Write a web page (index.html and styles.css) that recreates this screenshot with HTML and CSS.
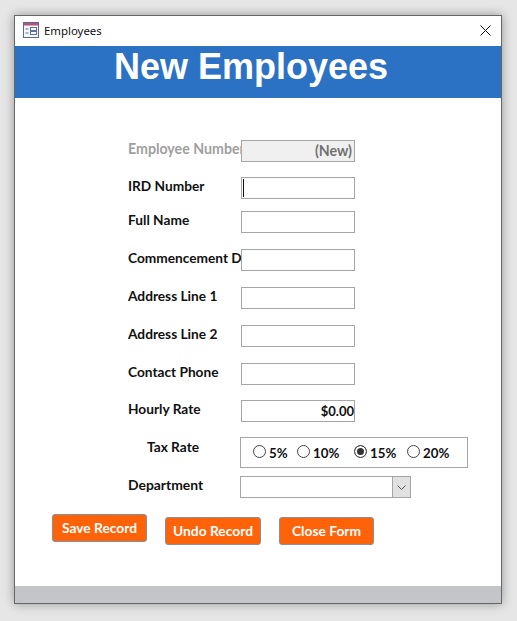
FILE: index.html
```html
<!DOCTYPE html>
<html lang="en">
<head>
  <meta charset="UTF-8">
  <meta name="viewport" content="width=device-width, initial-scale=1.0">
  <title>Employees</title>
  <link rel="stylesheet" href="styles.css">
</head>
<body>
  <div class="window">
    <div class="titlebar">
      <svg class="form-icon" width="16" height="16" viewBox="0 0 16 16">
        <rect x="0.5" y="0.5" width="15" height="15" fill="#f4f6fa" stroke="#5f6b85"/>
        <rect x="1" y="1" width="14" height="2.5" fill="#b5527e"/>
        <path d="M2.5 7h3M2.5 11h3" stroke="#5f7396" fill="none"/>
        <rect x="7.5" y="5.5" width="6" height="3" fill="none" stroke="#5f7396"/>
        <rect x="7.5" y="9.5" width="6" height="3" fill="none" stroke="#5f7396"/>
      </svg>
      <span class="title-text">Employees</span>
      <svg class="close-icon" width="11" height="11" viewBox="0 0 11 11">
        <path d="M0.5 0.5L10.5 10.5M10.5 0.5L0.5 10.5" stroke="#111" fill="none"/>
      </svg>
    </div>

    <div class="banner">New Employees</div>

    <form class="form-body">
      <div class="row row-first">
        <label class="label label-disabled">Employee Number</label>
        <div class="field field-disabled">(New)</div>
      </div>
      <div class="row row-15">
        <label class="label">IRD Number</label>
        <div class="field field-focus"><span class="caret"></span></div>
      </div>
      <div class="row row-12">
        <label class="label">Full Name</label>
        <div class="field"></div>
      </div>
      <div class="row">
        <label class="label">Commencement Date</label>
        <div class="field"></div>
      </div>
      <div class="row">
        <label class="label">Address Line 1</label>
        <div class="field"></div>
      </div>
      <div class="row">
        <label class="label">Address Line 2</label>
        <div class="field"></div>
      </div>
      <div class="row">
        <label class="label">Contact Phone</label>
        <div class="field"></div>
      </div>
      <div class="row row-15">
        <label class="label">Hourly Rate</label>
        <div class="field field-money">$0.00</div>
      </div>

      <div class="row row-15 row-tax">
        <label class="label label-tax">Tax Rate</label>
        <div class="tax-group">
          <span class="radio-item radio-5"><span class="radio"></span>5%</span>
          <span class="radio-item radio-10"><span class="radio"></span>10%</span>
          <span class="radio-item radio-15"><span class="radio radio-on"></span>15%</span>
          <span class="radio-item"><span class="radio"></span>20%</span>
        </div>
      </div>

      <div class="row row-8">
        <label class="label label-dept">Department</label>
        <div class="combo">
          <span class="combo-btn">
            <svg width="9" height="5" viewBox="0 0 9 5"><path d="M0.5 0.5L4.5 4.5L8.5 0.5" stroke="#555" fill="none"/></svg>
          </span>
        </div>
      </div>

      <div class="buttons">
        <button type="button" class="btn btn-save">Save Record</button>
        <button type="button" class="btn btn-undo">Undo Record</button>
        <button type="button" class="btn btn-close">Close Form</button>
      </div>
    </form>

    <div class="footer-band"></div>
  </div>
</body>
</html>
```

FILE: styles.css
```css
body {
  margin: 0;
  padding: 15px 0 0 14px;
  height: 621px;
  box-sizing: border-box;
  overflow: hidden;
  background-color: #e6e6e6;
  font-family: "Lato", "Open Sans", sans-serif;
}

.window {
  width: 488px;
  height: 589px;
  box-sizing: border-box;
  border: 1px solid #666;
  background: #fff;
  display: flex;
  flex-direction: column;
  box-shadow: 0 0 10px rgba(0, 0, 0, 0.35);
}

.titlebar {
  height: 30px;
  flex-shrink: 0;
  box-sizing: border-box;
  display: flex;
  align-items: center;
  padding: 0 10px 2px 8px;
}

.form-icon {
  margin-right: 5px;
}

.title-text {
  font-family: "Noto Sans", sans-serif;
  font-size: 11.4px;
  color: #111;
  flex-grow: 1;
}

.banner {
  height: 52px;
  flex-shrink: 0;
  box-sizing: border-box;
  padding-right: 14px;
  background-color: #2b72c4;
  color: #fff;
  font-family: "Liberation Sans", Arial, sans-serif;
  font-weight: bold;
  font-size: 36px;
  line-height: 42px;
  text-align: center;
}

.form-body {
  flex-grow: 1;
  display: flex;
  flex-direction: column;
  padding-left: 113px;
  font-size: 13.7px;
  font-weight: bold;
  color: #111;
}

.row {
  display: flex;
  height: 22px;
  margin-top: 16px;
}

.row-first {
  margin-top: 42px;
}

.row-15 {
  margin-top: 15px;
}

.row-12 {
  margin-top: 12px;
}

.row-8 {
  margin-top: 8px;
}

.row-tax {
  height: 31px;
}

.label {
  width: 113px;
  flex-shrink: 0;
  overflow: hidden;
  white-space: nowrap;
  line-height: 18px;
}

.label-disabled {
  color: #a0a0a0;
  font-size: 14.2px;
}

.label-tax {
  padding-left: 19px;
  width: 93px;
  line-height: 20px;
}

.label-dept {
  width: 112px;
  font-size: 13.9px;
}

.field {
  width: 114px;
  height: 22px;
  box-sizing: border-box;
  border: 1px solid #a6a6a6;
  background: #fff;
  text-align: right;
  line-height: 20px;
}

.field-disabled {
  background: #f0f0f0;
  color: #707070;
  padding-right: 2px;
  font-size: 14.2px;
}

.field-money {
  font-size: 13px;
}

.field-focus {
  text-align: left;
  padding-left: 1px;
}

.caret {
  display: inline-block;
  width: 1px;
  height: 18px;
  margin-top: 1px;
  background: #111;
  vertical-align: top;
}

.tax-group {
  width: 228px;
  height: 31px;
  box-sizing: border-box;
  border: 1px solid #a6a6a6;
  display: flex;
  align-items: center;
  padding-left: 12px;
  font-size: 13.3px;
}

.radio-item {
  display: flex;
  align-items: center;
}

.radio-5 {
  width: 44px;
}

.radio-10 {
  width: 57px;
}

.radio-15 {
  width: 53px;
}

.radio {
  width: 13px;
  height: 13px;
  box-sizing: border-box;
  border: 1px solid #444;
  border-radius: 50%;
  background: #fff;
  margin-right: 3px;
  margin-top: -2px;
}

.radio-on {
  background: #333;
  box-shadow: inset 0 0 0 2px #fff;
}

.combo {
  width: 171px;
  height: 22px;
  box-sizing: border-box;
  border: 1px solid #a6a6a6;
  background: #fff;
  display: flex;
  justify-content: flex-end;
}

.combo-btn {
  width: 17px;
  background: #e1e1e1;
  border-left: 1px solid #a6a6a6;
  display: flex;
  align-items: center;
  justify-content: center;
}

.buttons {
  display: flex;
  align-items: flex-start;
  margin: 16px 0 0 -76px;
  height: 31px;
}

.btn {
  height: 28px;
  padding: 0 0 2px;
  border: 1px solid #8a8f99;
  border-radius: 3px;
  background-color: #ff6309;
  color: #fff;
  font-family: inherit;
  font-weight: bold;
  font-size: 13.8px;
}

.btn-save {
  width: 95px;
}

.btn-undo {
  width: 96px;
  margin: 3px 0 0 18px;
}

.btn-close {
  width: 95px;
  margin: 3px 0 0 18px;
}

.footer-band {
  height: 17px;
  flex-shrink: 0;
  background-color: #c4c5c9;
}
```
